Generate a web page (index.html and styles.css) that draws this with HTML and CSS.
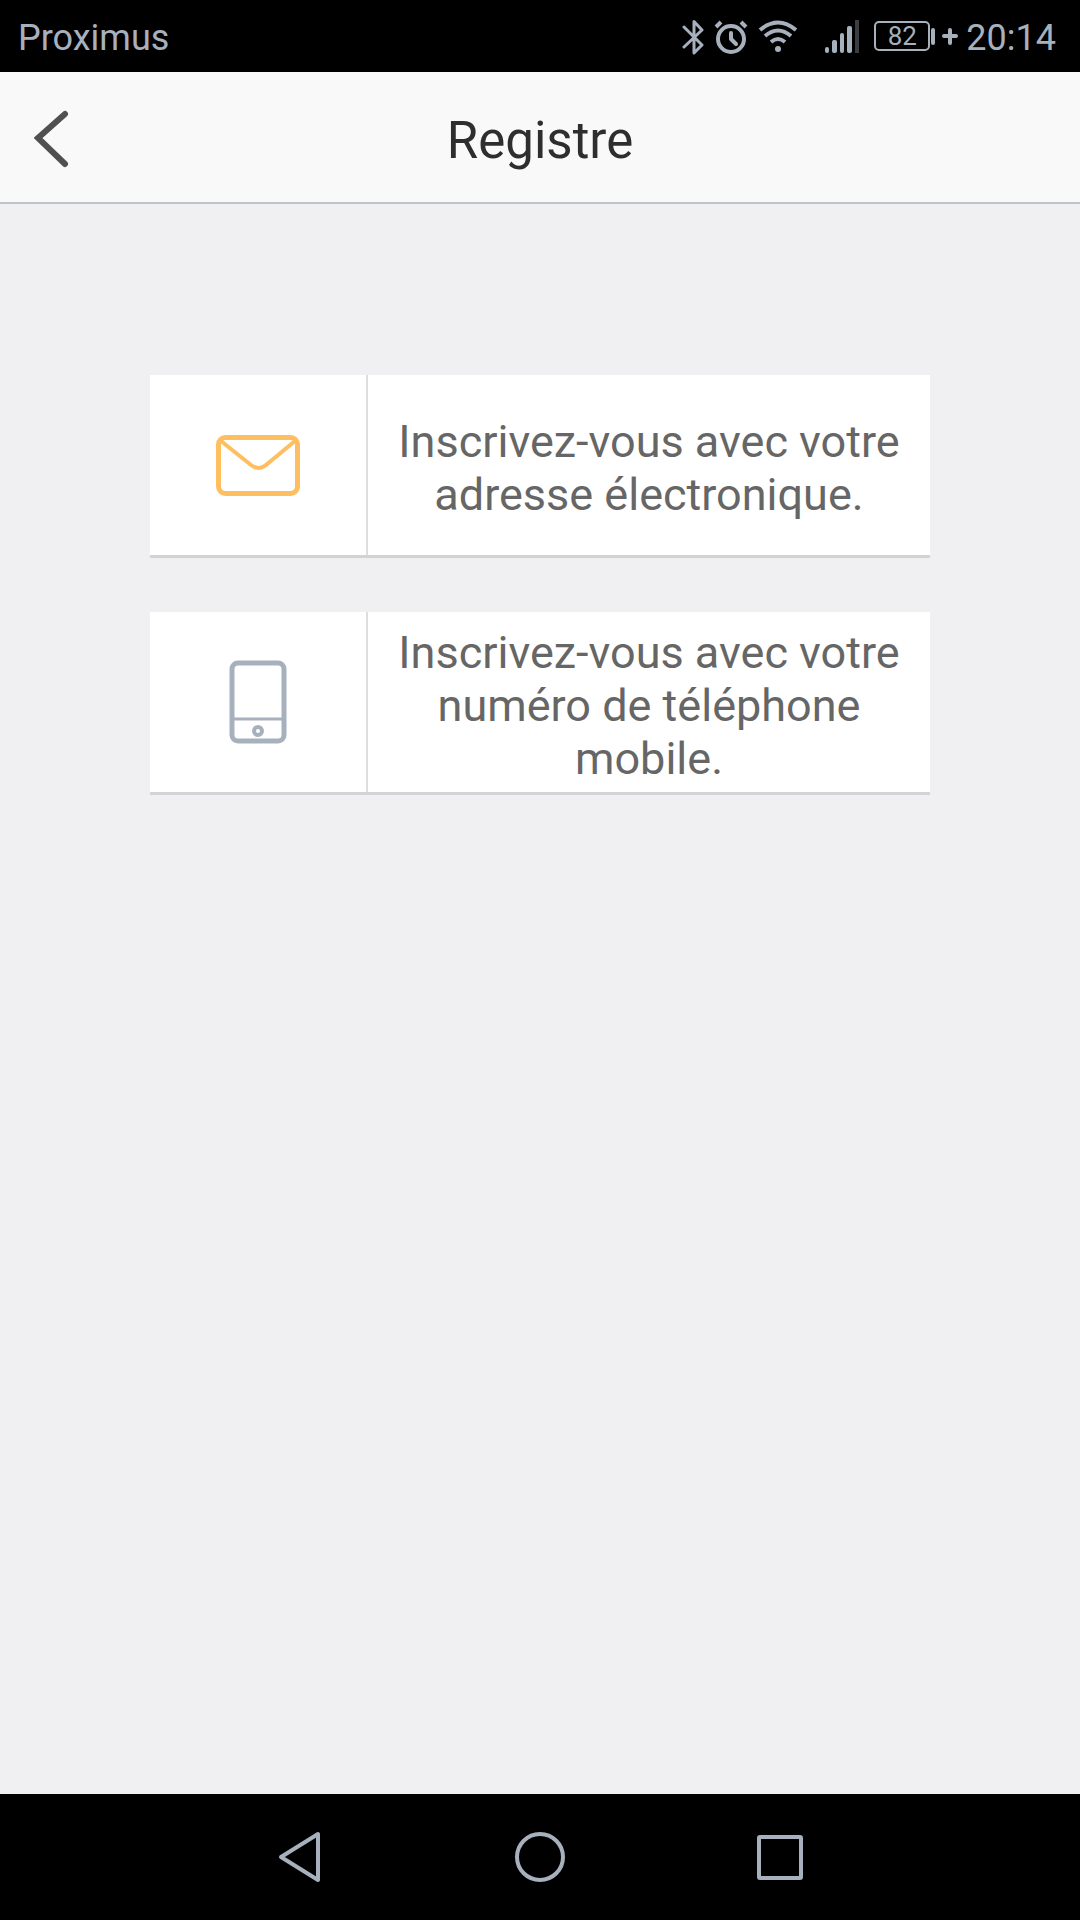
FILE: index.html
```html
<!DOCTYPE html>
<html lang="fr">
<head>
  <meta charset="UTF-8">
  <meta name="viewport" content="width=device-width, initial-scale=1.0">
  <title>Registre</title>
  <link rel="stylesheet" href="styles.css">
</head>
<body>

  <!-- status bar -->
  <div class="status-bar">
    <span class="carrier">Proximus</span>
    <div class="status-icons">
      <svg class="bluetooth" width="22" height="36" viewBox="0 0 22 36" fill="none" stroke="currentColor" stroke-width="3" stroke-linecap="round" stroke-linejoin="round">
        <path d="M2 7L20 25L12 33V1.500L20 10L2 27"/>
      </svg>
      <svg class="alarm" width="34" height="36" viewBox="0 0 34 36" fill="none" stroke="currentColor" stroke-width="4" stroke-linecap="round" stroke-linejoin="round">
        <circle cx="17" cy="19" r="13"/>
        <path d="M17 13V19L22 24"/>
        <path d="M2 7L7 2M27 2L32 7" stroke-linecap="butt"/>
      </svg>
      <svg class="wifi" width="40" height="36" viewBox="0 0 40 36" fill="none" stroke="currentColor" stroke-width="4">
        <path d="M2 10Q20 -5 38 10M7 16Q20 5 33 16M13 22Q20 16 27 22"/>
        <circle cx="20" cy="29" r="3" fill="currentColor" stroke="none"/>
      </svg>
      <svg class="signal" width="36" height="36" viewBox="0 0 36 36" fill="currentColor">
        <rect x="1" y="27" width="4" height="6" rx="2"/>
        <rect x="8" y="20" width="5" height="13" rx="2"/>
        <rect x="16" y="13" width="4" height="20" rx="2"/>
        <rect x="23" y="6" width="5" height="27" rx="2"/>
        <rect x="31" y="0" width="4" height="33" opacity="0.35"/>
      </svg>
      <span class="battery">82</span>
      <svg class="charge" width="28" height="36" viewBox="0 0 28 36" fill="none" stroke="currentColor" stroke-width="4" stroke-linecap="round">
        <path d="M3 10V23M14 16H26M20 10V23"/>
      </svg>
      <span class="clock">20:14</span>
    </div>
  </div>

  <!-- header -->
  <header class="header">
    <button class="back" type="button" aria-label="Retour">
      <svg width="36" height="60" viewBox="0 0 36 60" fill="none" stroke="currentColor" stroke-width="6" stroke-linecap="round">
        <path d="M31 5L4 29L31 55"/>
      </svg>
    </button>
    <h1>Registre</h1>
  </header>

  <!-- sign up choices -->
  <main class="content">
    <a class="card" href="#email">
      <span class="card-icon mail">
        <svg width="84" height="61" viewBox="0 0 84 61" fill="none" stroke="currentColor">
          <rect x="2.5" y="2.5" width="79" height="56" rx="7" stroke-width="5"/>
          <path d="M5 6L35 30Q43 36 50 30L79 6" stroke-width="4"/>
        </svg>
      </span>
      <span class="card-text">Inscrivez-vous avec votre adresse électronique.</span>
    </a>
    <a class="card" href="#mobile">
      <span class="card-icon phone">
        <svg width="58" height="84" viewBox="0 0 58 84" fill="none" stroke="currentColor">
          <rect x="3" y="3" width="52" height="78" rx="6" stroke-width="5"/>
          <path d="M3 59H55" stroke-width="3"/>
          <circle cx="29" cy="71" r="4" stroke-width="4"/>
        </svg>
      </span>
      <span class="card-text">Inscrivez-vous avec votre numéro de téléphone mobile.</span>
    </a>
  </main>

  <!-- android navigation -->
  <nav class="nav-bar">
    <button type="button" aria-label="Précédent">
      <svg width="52" height="52" viewBox="0 0 52 52">
        <path d="M7 26L44 3V49Z"/>
      </svg>
    </button>
    <button type="button" aria-label="Accueil">
      <svg width="52" height="52" viewBox="0 0 52 52">
        <circle cx="26" cy="26" r="23"/>
      </svg>
    </button>
    <button type="button" aria-label="Applications récentes">
      <svg width="52" height="52" viewBox="0 0 52 52">
        <rect x="5" y="6" width="42" height="41" rx="1"/>
      </svg>
    </button>
  </nav>

</body>
</html>
```
FILE: styles.css
```css
* {
  box-sizing: border-box;
}
body {
  display: flex;
  flex-direction: column;
  min-height: 100vh;
  margin: 0;
  background-color: #f0f0f3;
  font-family: Roboto, "Liberation Sans", sans-serif;
}
svg {
  display: block;
}
button {
  padding: 0;
  border: none;
  background: none;
  color: inherit;
  cursor: pointer;
}
/* status bar */
.status-bar {
  display: flex;
  align-items: center;
  justify-content: space-between;
  height: 72px;
  padding: 4px 24px 0 18px;
  background-color: #000;
  color: #a7b1be;
  font-size: 36px;
}
.status-icons {
  display: flex;
  align-items: center;
}
.bluetooth,
.alarm {
  margin-right: 10px;
}
.wifi {
  margin-right: 26px;
}
.signal {
  margin-right: 14px;
}
.battery {
  width: 56px;
  height: 30px;
  margin-bottom: 4px;
  border: 2px solid #a7b1be;
  border-radius: 5px;
  font-size: 26px;
  line-height: 26px;
  text-align: center;
}
.charge {
  margin-right: 8px;
}
/* header */
.header {
  display: grid;
  grid-template-columns: 104px 1fr 104px;
  align-items: center;
  height: 132px;
  border-bottom: 2px solid #bec4cc;
  background-color: #f9f9f9;
}
.back {
  display: flex;
  padding: 4px 0 0 34px;
  color: #505050;
}
.header h1 {
  margin: 0;
  padding-top: 6px;
  color: #2e2e2e;
  font-size: 51px;
  font-weight: 400;
  text-align: center;
}
/* sign up choices */
.content {
  display: flex;
  flex: 1;
  flex-direction: column;
  gap: 54px;
  padding: 171px 150px 0;
}
.card {
  display: grid;
  grid-template-columns: 218px 1fr;
  min-height: 183px;
  border-bottom: 3px solid #d2d3d5;
  background-color: #fff;
  color: #666;
  text-decoration: none;
}
.card-icon {
  display: flex;
  align-items: center;
  justify-content: center;
  border-right: 2px solid #dedede;
}
.mail {
  color: #ffbe5f;
}
.phone {
  color: #a7b1be;
}
.card-text {
  align-self: center;
  padding: 6px 24px 0;
  font-size: 45px;
  line-height: 53px;
  text-align: center;
}
/* android navigation */
.nav-bar {
  display: flex;
  justify-content: center;
  height: 126px;
  background-color: #000;
}
.nav-bar button {
  display: flex;
  align-items: center;
  justify-content: center;
  width: 240px;
}
.nav-bar svg {
  fill: none;
  stroke: #a7b1be;
  stroke-width: 4;
  stroke-linejoin: round;
}
```
